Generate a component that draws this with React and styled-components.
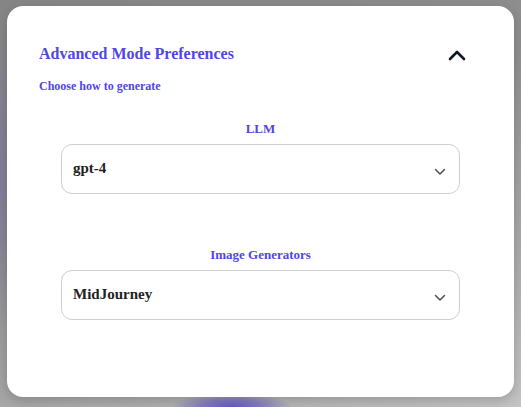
import React from "react";
import styled, { createGlobalStyle } from "styled-components";

const Global = createGlobalStyle`
  html, body { margin: 0; padding: 0; }
  body {
    width: 521px;
    height: 407px;
    overflow: hidden;
    font-family: "Liberation Serif", "Times New Roman", serif;
    background:
      radial-gradient(ellipse 60px 14px at 232px 407px, rgba(100, 88, 200, 1) 0%, rgba(100, 88, 200, 0.6) 50%, rgba(100, 88, 200, 0) 100%),
      radial-gradient(ellipse 30px 150px at 0px 180px, rgba(120, 115, 160, 0.6), rgba(120, 115, 160, 0)),
      linear-gradient(160deg, #858585 0%, #8f8f8f 40%, #a8a8a8 70%, #c4c4c4 100%);
  }
`;

const Page = styled.div`
  box-sizing: border-box;
  width: 521px;
  height: 407px;
  padding: 6px 7px 10px 7px;
`;

const Card = styled.div`
  box-sizing: border-box;
  height: 391px;
  background: #ffffff;
  border-radius: 16px;
  box-shadow: 0 4px 12px rgba(0, 0, 0, 0.18);
  padding: 38px 32px 0 32px;
  display: flex;
  flex-direction: column;
`;

const Header = styled.div`
  display: flex;
  align-items: flex-start;
  justify-content: space-between;
`;

const Title = styled.h2`
  margin: 0;
  font-size: 16px;
  line-height: 20px;
  font-weight: 700;
  color: #5046e5;
`;

const Subtitle = styled.p`
  margin: 15px 0 0 0;
  font-size: 12px;
  line-height: 14px;
  font-weight: 700;
  color: #5046e5;
`;

const Toggle = styled.button`
  border: 0;
  background: none;
  padding: 0;
  margin: 4px 15px 0 0;
  width: 20px;
  height: 14px;
  display: flex;
  align-items: center;
  justify-content: center;
  cursor: pointer;
`;

const Section = styled.div`
  display: flex;
  flex-direction: column;
  align-items: center;
  margin-top: ${(p) => p.$top}px;
  padding: 0 22px;
`;

const Label = styled.div`
  font-size: 13px;
  line-height: 16px;
  font-weight: 700;
  color: #5046e5;
  margin-bottom: 7px;
`;

const Select = styled.div`
  box-sizing: border-box;
  width: 100%;
  height: 50px;
  border: 1px solid #cfcfcf;
  border-radius: 11px;
  display: flex;
  align-items: center;
  justify-content: space-between;
  padding: 0 13px 0 11px;
`;

const Value = styled.span`
  font-size: 15px;
  font-weight: 700;
  color: #222;
  margin-top: -1px;
`;

const ChevronDown = () => (
  <svg width="12" height="8" viewBox="0 0 12 8" style={{ marginTop: 6 }}>
    <path d="M1.5 1.5 L6 6 L10.5 1.5" fill="none" stroke="#555" strokeWidth="1.6" strokeLinecap="round" strokeLinejoin="round" />
  </svg>
);

const ChevronUp = () => (
  <svg width="18" height="11" viewBox="0 0 18 11">
    <path d="M2 9 L9 2 L16 9" fill="none" stroke="#111827" strokeWidth="2.6" strokeLinecap="round" strokeLinejoin="round" />
  </svg>
);

export default function App() {
  return (
    <>
      <Global />
      <Page>
        <Card>
          <Header>
            <div>
              <Title>Advanced Mode Preferences</Title>
              <Subtitle>Choose how to generate</Subtitle>
            </div>
            <Toggle aria-label="collapse">
              <ChevronUp />
            </Toggle>
          </Header>
          <Section $top={28}>
            <Label>LLM</Label>
            <Select>
              <Value>gpt-4</Value>
              <ChevronDown />
            </Select>
          </Section>
          <Section $top={53}>
            <Label>Image Generators</Label>
            <Select>
              <Value>MidJourney</Value>
              <ChevronDown />
            </Select>
          </Section>
        </Card>
      </Page>
    </>
  );
}
